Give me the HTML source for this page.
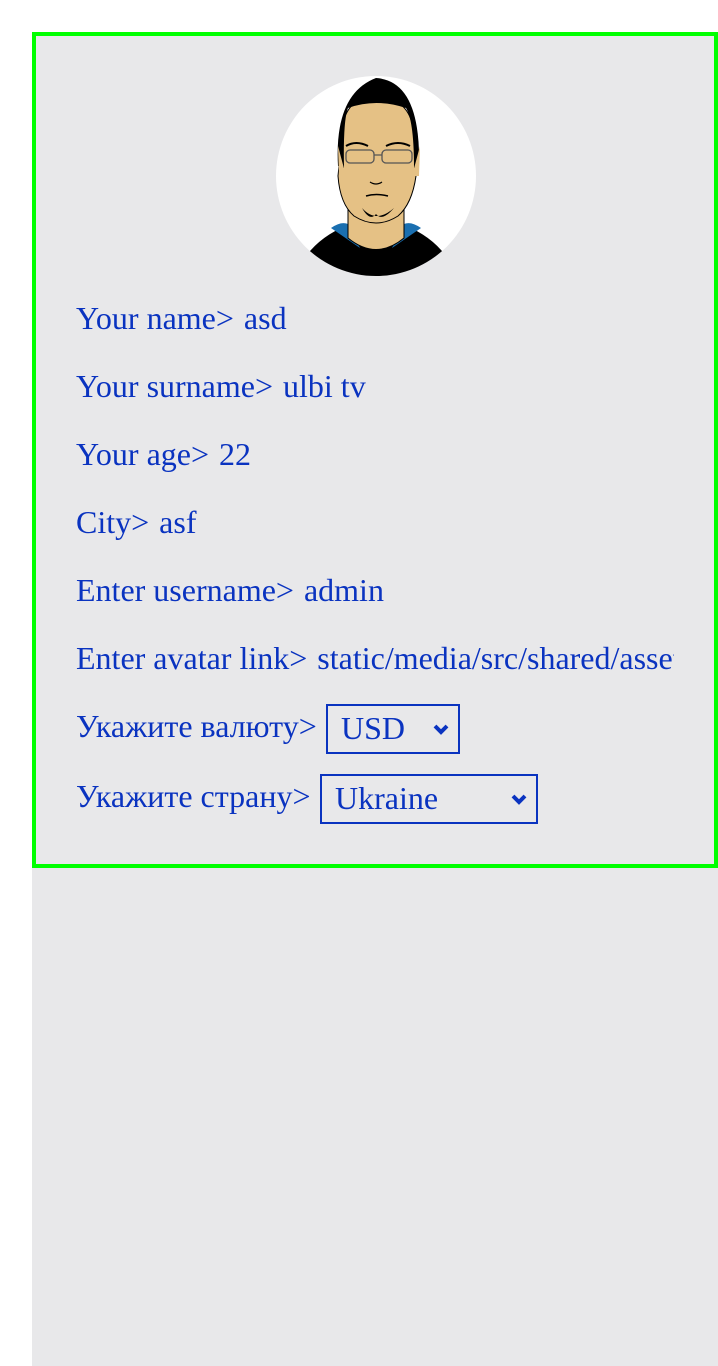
<!DOCTYPE html>
<html><head><meta charset="utf-8"><style>
html,body{margin:0;padding:0;background:#fff;width:718px;height:1366px;overflow:hidden}
.bg{position:absolute;left:32px;top:32px;width:686px;height:1334px;background:#e8e8ea}
.card{position:absolute;left:32px;top:32px;width:678px;height:828px;border:4px solid #00ff00;background:#e8e8ea}
.t{position:absolute;left:76px;font-family:"Liberation Serif",serif;font-size:32px;color:#0a33c0;white-space:nowrap;line-height:1}
.t b{font-weight:normal;margin-left:10px}
.sel{position:absolute;border:2px solid #0a33c0;box-sizing:border-box;font-family:"Liberation Serif",serif;font-size:32px;color:#0a33c0;line-height:1}
.sel span{position:absolute;left:13px;top:6px}
.sel svg{position:absolute;right:8px;top:17px}
</style></head><body>
<div class="bg"></div>
<div class="card"></div>
<svg style="position:absolute;left:276px;top:76px" width="200" height="200" viewBox="0 0 200 200">
<defs><clipPath id="c"><circle cx="100" cy="100" r="100"/></clipPath></defs>
<circle cx="100" cy="100" r="100" fill="#fff"/>
<g clip-path="url(#c)">
<path d="M30 180 Q45 160 70 150 L130 150 Q155 160 170 180 L180 210 L20 210Z" fill="#000"/>
<path d="M55 152 Q65 145 72 148 L84 172 Z M145 152 Q135 145 128 148 L116 172 Z" fill="#1a6fb0"/>
<path d="M72 130 L72 162 Q100 185 128 162 L128 130Z" fill="#e5c185" stroke="#000" stroke-width="1"/>
<path d="M66 60 Q66 22 100 20 Q136 22 138 60 L140 100 Q136 128 122 140 Q100 154 78 140 Q64 128 62 100Z" fill="#e5c185" stroke="#000" stroke-width="1"/>
<path d="M62 90 Q58 18 100 2 Q145 5 143 90 L138 92 Q138 45 130 32 Q100 22 72 32 Q67 45 68 92Z" fill="#000"/>
<path d="M62 70 L70 100 L63 100Z M144 70 L136 100 L143 100Z" fill="#e5c185"/>
<rect x="70" y="74" width="28" height="13" rx="4" fill="none" stroke="#555" stroke-width="1.3"/>
<rect x="106" y="74" width="30" height="13" rx="4" fill="none" stroke="#555" stroke-width="1.3"/>
<path d="M98 79 L106 79" stroke="#555" stroke-width="1.3"/>
<path d="M70 70 Q80 64 92 70 M110 70 Q122 64 134 70" stroke="#000" stroke-width="2" fill="none"/>
<path d="M94 106 Q100 110 106 106" stroke="#000" stroke-width="1.2" fill="none"/>
<path d="M90 120 Q100 117 112 120" stroke="#000" stroke-width="1.5" fill="none"/>
<path d="M86 132 Q100 148 118 132 Q106 146 100 138 Q94 146 86 132Z" fill="#000"/>
</g></svg>
<div class="t" style="top:302px">Your name&gt;<b>asd</b></div>
<div class="t" style="top:370px">Your surname&gt;<b>ulbi tv</b></div>
<div class="t" style="top:438px">Your age&gt;<b>22</b></div>
<div class="t" style="top:506px">City&gt;<b>asf</b></div>
<div class="t" style="top:574px">Enter username&gt;<b>admin</b></div>
<div class="t" style="top:642px;width:598px;overflow:hidden">Enter avatar link&gt;<b>static/media/src/shared/assets/avatar.jpg</b></div>
<div class="t" style="top:710px">Укажите валюту&gt;</div>
<div class="t" style="top:780px">Укажите страну&gt;</div>
<div class="sel" style="left:326px;top:704px;width:134px;height:50px"><span>USD</span><svg width="18" height="12" viewBox="0 0 18 12"><path d="M3 3 L9 9 L15 3" stroke="#0a33c0" stroke-width="4" fill="none"/></svg></div>
<div class="sel" style="left:320px;top:774px;width:218px;height:50px"><span>Ukraine</span><svg width="18" height="12" viewBox="0 0 18 12"><path d="M3 3 L9 9 L15 3" stroke="#0a33c0" stroke-width="4" fill="none"/></svg></div>
</body></html>
